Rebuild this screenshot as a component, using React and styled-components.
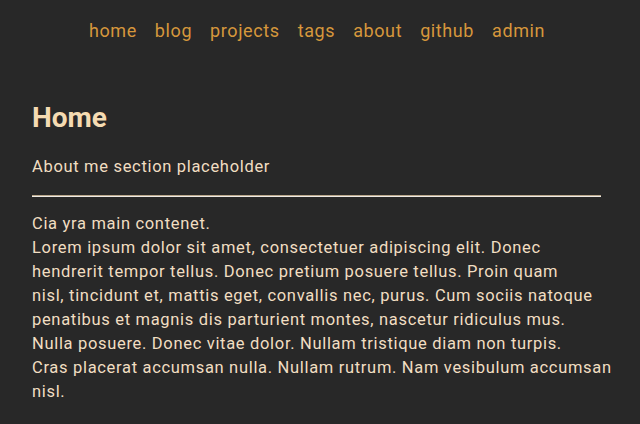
import React from "react";
import styled, { createGlobalStyle } from "styled-components";

const Global = createGlobalStyle`
  html, body { margin: 0; padding: 0; background: #282828; }
  body { font-family: Roboto, "Noto Sans", sans-serif; color: #f1dec2; }
`;

const Nav = styled.nav`
  display: flex;
  justify-content: center;
  gap: 18px;
  padding: 18px 0 0;
  margin-left: -6px;
`;

const NavLink = styled.a`
  font-size: 18px;
  line-height: 26px;
  letter-spacing: 0.6px;
  color: #d6973c;
  text-decoration: none;
`;

const Main = styled.main`
  padding: 0 39px 24px 32px;
`;

const Title = styled.h1`
  margin: 58px 0 0;
  font-size: 28px;
  line-height: 32px;
  font-weight: 700;
  color: #f5dbb2;
`;

const Text = styled.p`
  margin: ${(p) => p.$top}px 0 0;
  font-size: 16.5px;
  line-height: 24px;
  letter-spacing: 0.68px;
  color: #f1dec2;
`;

const Line = styled.span`
  display: block;
  white-space: nowrap;
`;

const Rule = styled.hr`
  margin: 16px 0 0;
  border: 0;
  height: 1px;
  background: #b8a68a;
  border-bottom: 1px solid #eeeae4;
`;

const links = ["home", "blog", "projects", "tags", "about", "github", "admin"];

const lines = [
  "Cia yra main contenet.",
  "Lorem ipsum dolor sit amet, consectetuer adipiscing elit. Donec",
  "hendrerit tempor tellus. Donec pretium posuere tellus. Proin quam",
  "nisl, tincidunt et, mattis eget, convallis nec, purus. Cum sociis natoque",
  "penatibus et magnis dis parturient montes, nascetur ridiculus mus.",
  "Nulla posuere. Donec vitae dolor. Nullam tristique diam non turpis.",
  "Cras placerat accumsan nulla. Nullam rutrum. Nam vesibulum accumsan",
  "nisl.",
];

export default function App() {
  return (
    <>
      <Global />
      <Nav>
        {links.map((l) => (
          <NavLink key={l} href="#">{l}</NavLink>
        ))}
      </Nav>
      <Main>
        <Title>Home</Title>
        <Text $top={21}>About me section placeholder</Text>
        <Rule />
        <Text $top={15}>
          {lines.map((l, i) => (
            <Line key={i}>{l}</Line>
          ))}
        </Text>
      </Main>
    </>
  );
}
